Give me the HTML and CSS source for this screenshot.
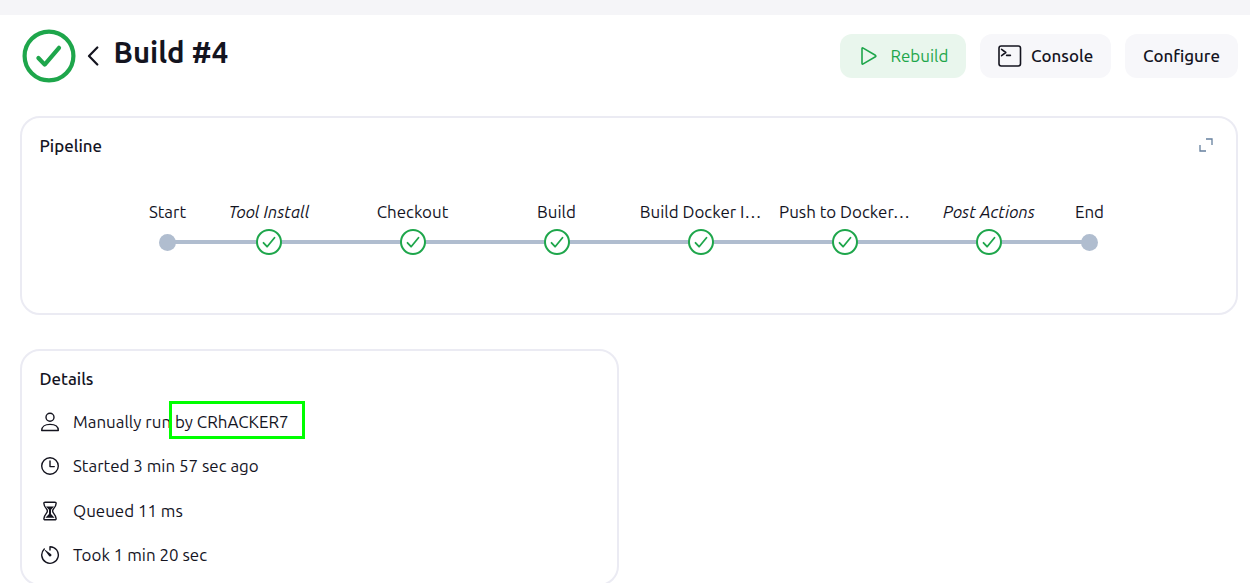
FILE: index.html
```html
<!DOCTYPE html>
<html lang="en">
<head>
<meta charset="utf-8">
<title>Build #4</title>
<link rel="stylesheet" href="styles.css">
</head>
<body>
<svg class="defs" width="0" height="0">
  <symbol id="check" viewBox="0 0 26 26">
    <circle cx="13" cy="13" r="12" fill="#fff" stroke="#1ea64b" stroke-width="2"/>
    <path d="M7.500 13.800l3.600 3.900 7.400-9" fill="none" stroke="#1ea64b" stroke-width="1.800" stroke-linecap="round" stroke-linejoin="round"/>
  </symbol>
</svg>
<div class="topbar"></div>
<main class="page">
  <header class="header">
    <svg class="status" viewBox="0 0 54 54"><circle cx="27" cy="27" r="24.400"/><path d="M16.400 29l6.300 6.600L37 18.800"/></svg>
    <svg class="back" viewBox="0 0 12 20"><path d="M10.300 1.500L2 10l8.300 8.500"/></svg>
    <h1 class="title">Build #4</h1>
    <div class="actions">
      <button class="button rebuild"><svg width="18" height="20" viewBox="0 0 18 20"><path d="M2 2.800v14.400q0 1.300 1.200.7l12.200-7.100q1-.8 0-1.500L3.200 2.100Q2 1.500 2 2.800z"/></svg><span>Rebuild</span></button>
      <button class="button console"><svg width="24" height="22" viewBox="0 0 24 22"><rect x="1" y="1" width="21.500" height="20" rx="2.200"/><path d="M3.600 4.300l4.200 3.200-4.200 3.200M8.600 10.400h3.800"/></svg><span>Console</span></button>
      <button class="button configure"><span>Configure</span></button>
    </div>
  </header>

  <section class="card pipeline">
    <div class="card-head">
      <h2 class="heading">Pipeline</h2>
      <svg class="expand" viewBox="0 0 14 14"><path d="M7 1h6v6M1 7v6h6"/></svg>
    </div>
    <ol class="stages">
      <li class="stage first"><span class="label">Start</span><span class="node"><i class="dot"></i></span></li>
      <li class="stage"><em class="label">Tool Install</em><span class="node"><svg class="ok"><use href="#check"/></svg></span></li>
      <li class="stage"><span class="label">Checkout</span><span class="node"><svg class="ok"><use href="#check"/></svg></span></li>
      <li class="stage"><span class="label">Build</span><span class="node"><svg class="ok"><use href="#check"/></svg></span></li>
      <li class="stage"><span class="label">Build Docker I…</span><span class="node"><svg class="ok"><use href="#check"/></svg></span></li>
      <li class="stage"><span class="label">Push to Docker…</span><span class="node"><svg class="ok"><use href="#check"/></svg></span></li>
      <li class="stage"><em class="label">Post Actions</em><span class="node"><svg class="ok"><use href="#check"/></svg></span></li>
      <li class="stage last"><span class="label">End</span><span class="node"><i class="dot"></i></span></li>
    </ol>
  </section>

  <section class="card details">
    <h2 class="heading">Details</h2>
    <ul class="facts">
      <li class="fact"><svg class="icon" viewBox="0 0 20 20"><circle cx="10" cy="5.300" r="4"/><path d="M1.700 18.500c0-4 3.300-6.100 8.300-6.100s8.300 2.100 8.300 6.100z"/></svg><span>Manually run <span class="user">by CRhACKER7</span></span></li>
      <li class="fact"><svg class="icon" viewBox="0 0 20 20"><circle cx="10" cy="10" r="8.300"/><path d="M10 5v5.600h4.300"/></svg><span>Started 3 min 57 sec ago</span></li>
      <li class="fact"><svg class="icon" viewBox="0 0 20 20"><path d="M5.200 1.200h9.600q1.400 0 1.300 1.300c-.2 4-3.500 5-3.500 7.500s3.300 3.500 3.500 7.500q.1 1.300-1.300 1.300H5.200q-1.400 0-1.300-1.300c.2-4 3.500-5 3.500-7.500S4.100 6.500 3.900 2.500Q3.800 1.200 5.200 1.200z"/><path class="sand" d="M6 5.400h8L11 8.700v4.200l3.600 3.900H5.400L9 12.900V8.700z"/></svg><span>Queued 11 ms</span></li>
      <li class="fact"><svg class="icon" viewBox="0 0 20 20"><path d="M10 5V1.700a8.300 8.300 0 1 1-5.700 2.300"/><path class="sand" d="M4.900 5.600q-.5-.9.5-.6l5.800 4.200a1.400 1.400 0 0 1-1.900 2z"/></svg><span>Took 1 min 20 sec</span></li>
    </ul>
  </section>
</main>
</body>
</html>
```

FILE: styles.css
```css
*, ::after { box-sizing: border-box; }
body {
  margin: 0;
  height: 583px;
  overflow: hidden;
  background: #fff;
  color: #14141f;
  font: 420 16.93px/22px Ubuntu, "Noto Sans", "Open Sans", sans-serif;
}
h1, h2, ol, ul { margin: 0; padding: 0; list-style: none; }
svg { flex: none; fill: none; stroke: currentColor; stroke-linecap: round; stroke-linejoin: round; }
.defs { display: block; height: 0; }
.topbar { height: 15px; background: #f5f5f8; }
.page { padding: 14px 12px 0 20px; }

.header { display: flex; height: 54px; align-items: center; }
.status { width: 54px; height: 54px; margin-left: 2px; color: #1ea64b; stroke-width: 4.2; }
.back { width: 12px; height: 20px; margin-left: 10.5px; stroke-width: 2.2; }
.title { margin: -7px 0 0 15px; font-size: 29.3px; line-height: 36px; font-weight: 700; white-space: nowrap; }
.actions { display: flex; gap: 14px; margin-left: auto; }
.button {
  display: flex; align-items: center; justify-content: flex-start;
  height: 44px; padding: 0 0 0 18px; border: 0; border-radius: 12px;
  background: #f7f7fa; color: #14141f; font: inherit; font-weight: 550; white-space: nowrap;
}
.rebuild { width: 126px; padding-left: 20px; gap: 12.5px; background: #e9f6ed; color: #1ea64b; font-weight: 430; stroke-width: 1.6; }
.console { width: 131px; gap: 9px; stroke-width: 1.6; }
.configure { width: 113px; }

.card { border: 2px solid #ebebf3; border-radius: 20px; background: #fff; }
.heading { margin-left: -0.5px; font-size: 16.9px; line-height: 22px; font-weight: 550; }
.pipeline { height: 199px; margin-top: 33px; padding: 17px 23px 0 18px; }
.card-head { display: flex; justify-content: space-between; align-items: center; }
.expand { width: 14px; height: 14px; margin-top: -2px; color: #66809e; stroke-width: 1.3; stroke-linecap: butt; stroke-linejoin: miter; }
.stages { display: grid; grid-template-columns: 58px repeat(6, 144px) 58px; margin: 44px 0 0 98.5px; }
.stage { display: flex; flex-direction: column; align-items: center; white-space: nowrap; }
.label { line-height: 22px; }
em.label { padding-left: 1px; }
.node {
  display: flex; align-items: center; justify-content: center; align-self: stretch;
  height: 26px; margin-top: 6px;
  background: linear-gradient(#b0bdcf, #b0bdcf) center / 100% 4px no-repeat;
}
.first .node { background-position: right; background-size: 50% 4px; }
.last .node { background-position: left; background-size: 50% 4px; }
.dot { width: 17px; height: 17px; border-radius: 50%; background: #b0bdcf; }
.ok { width: 26px; height: 26px; }

.details { width: 599px; height: 237px; margin-top: 34px; padding: 17px 18px; }
.facts { display: grid; gap: 22.4px; margin-top: 21px; }
.fact { display: flex; align-items: center; gap: 13px; height: 22px; white-space: nowrap; }
.icon { width: 20px; height: 20px; stroke-width: 1.4; }
.sand { fill: currentColor; stroke: none; }
.user { position: relative; }
.user::after { content: ""; position: absolute; left: -6px; top: -11px; width: 136px; height: 38px; border: 3px solid #0f0; }
```
